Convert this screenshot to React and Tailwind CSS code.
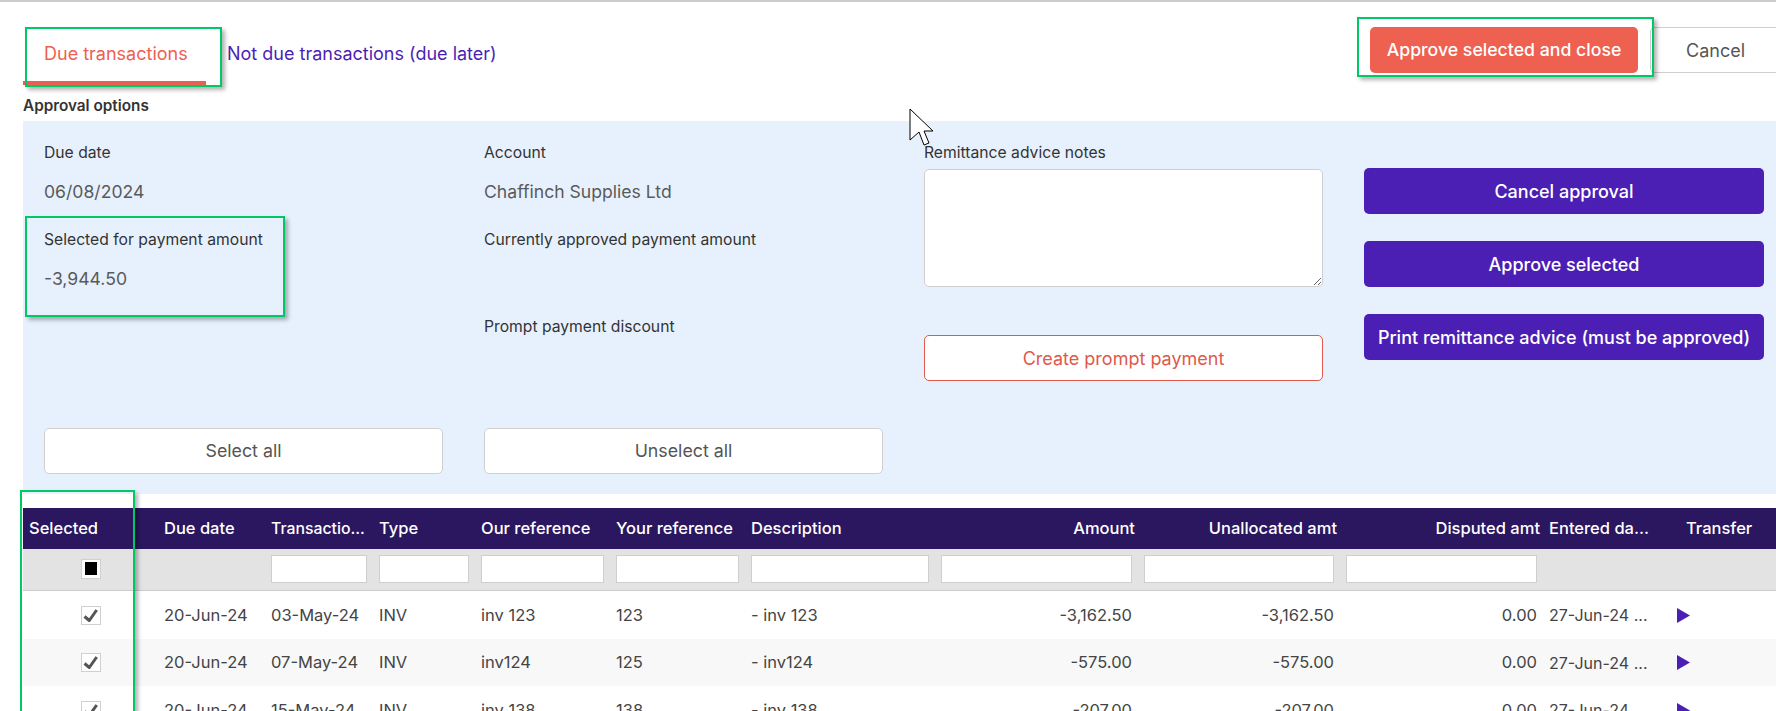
import React from "react";

const rows = [
  { due: "20-Jun-24", trans: "03-May-24", ours: "inv 123", yours: "123", desc: "- inv 123", amt: "-3,162.50", shade: false, h: "h-[48px]" },
  { due: "20-Jun-24", trans: "07-May-24", ours: "inv124", yours: "125", desc: "- inv124", amt: "-575.00", shade: true, h: "h-[47px]" },
  { due: "20-Jun-24", trans: "15-May-24", ours: "inv 138", yours: "138", desc: "- inv 138", amt: "-207.00", shade: false, h: "h-[48px]" },
];

const gridCols =
  "grid grid-cols-[141px_107px_108px_102px_135px_135px_190px_203px_202px_203px_128px_99px] items-center";

const FilterInput = () => (
  <div className="pr-[12px] pb-[2px]">
    <input type="text" className="w-full h-[28px] bg-white border border-[#cfcfcf] block outline-none" />
  </div>
);

const Check = () => (
  <span className="w-[20px] h-[19px] bg-white border border-[#d0d0d0] block">
    <svg width="18" height="17" viewBox="0 0 18 17">
      <path d="M2.5 9.5 L7.3 13.5 L14.7 3" fill="none" stroke="#555" strokeWidth="3" strokeLinejoin="round" />
    </svg>
  </span>
);

const Label = ({ children }) => <div className="text-[15.7px] leading-[18px] text-[#333]">{children}</div>;
const Value = ({ children }) => <div className="text-[17.6px] leading-[22px] text-[#5a5a5a]">{children}</div>;

const OutlineButton = ({ children }) => (
  <button
    type="button"
    className="w-[399px] h-[46px] pt-[1px] bg-white border border-[#cfcfcf] rounded-[5px] text-[17.8px] text-[#555]"
  >
    {children}
  </button>
);

const PurpleButton = ({ children }) => (
  <button
    type="button"
    className="w-[400px] h-[46px] bg-[#4c1fb4] rounded-[5px] text-[18px] font-medium text-white whitespace-nowrap"
  >
    {children}
  </button>
);

const Highlight = ({ className }) => (
  <div
    className={`absolute border-[2px] border-[#00c864] shadow-[3px_3px_4px_rgba(0,0,0,0.3)] pointer-events-none ${className}`}
  />
);

export default function App() {
  return (
    <div className="relative w-[1776px] h-[711px] overflow-hidden bg-white border-t-[2px] border-[#cccccc] font-['Inter',sans-serif]">
      <div className="flex items-start h-[119px] pl-[23px]">
        <div className="flex flex-col pt-[40px]">
          <div className="flex">
            <div className="w-[204px] pl-[21px] text-[18px] leading-[24px] text-[#ee6050]">Due transactions</div>
            <div className="text-[18px] leading-[24px] text-[#4c1fb4]">Not due transactions (due later)</div>
          </div>
          <div className="w-[183px] h-[4px] mt-[15px] bg-[#e8604f]" />
          <div className="mt-[12px] text-[15.3px] leading-[18px] font-semibold text-[#333]">Approval options</div>
        </div>
        <div className="ml-auto flex items-center pt-[25px]">
          <button
            type="button"
            className="w-[268px] h-[46px] bg-[#ee6050] rounded-[5px] text-[17.7px] font-medium text-white whitespace-nowrap"
          >
            Approve selected and close
          </button>
          <button
            type="button"
            className="w-[126px] h-[46px] ml-[12px] pl-[4px] bg-white border border-r-0 border-[#cfcfcf] rounded-l-[5px] text-[18px] text-[#555]"
          >
            Cancel
          </button>
        </div>
      </div>

      <div className="ml-[23px] h-[373px] bg-[#e7f1fe] pl-[21px] pt-[23px] grid grid-cols-[399px_399px_399px_400px] gap-x-[41px]">
        <div className="flex flex-col">
          <Label>Due date</Label>
          <div className="mt-[19px]"><Value>06/08/2024</Value></div>
          <div className="mt-[28px]"><Label>Selected for payment amount</Label></div>
          <div className="mt-[19px]"><Value>-3,944.50</Value></div>
          <div className="mt-[138px]"><OutlineButton>Select all</OutlineButton></div>
        </div>
        <div className="flex flex-col">
          <Label>Account</Label>
          <div className="mt-[19px]"><Value>Chaffinch Supplies Ltd</Value></div>
          <div className="mt-[28px]"><Label>Currently approved payment amount</Label></div>
          <div className="mt-[69px]"><Label>Prompt payment discount</Label></div>
          <div className="mt-[92px]"><OutlineButton>Unselect all</OutlineButton></div>
        </div>
        <div className="flex flex-col">
          <Label>Remittance advice notes</Label>
          <textarea className="block w-[399px] h-[118px] mt-[7px] bg-white border border-[#cfcfcf] rounded-[5px] outline-none" />
          <button
            type="button"
            className="w-[399px] h-[46px] mt-[48px] bg-white border border-[#e0594b] rounded-[5px] text-[18px] text-[#e0594b]"
          >
            Create prompt payment
          </button>
        </div>
        <div className="flex flex-col gap-[27px] pt-[24px]">
          <PurpleButton>Cancel approval</PurpleButton>
          <PurpleButton>Approve selected</PurpleButton>
          <PurpleButton>Print remittance advice (must be approved)</PurpleButton>
        </div>
      </div>

      <div className="ml-[23px] mt-[14px]">
        <div className={`${gridCols} h-[41px] bg-[#2b1660] text-white text-[16.5px] font-medium whitespace-nowrap`}>
          <div className="pl-[6px]">Selected</div>
          <div>Due date</div>
          <div className="text-[15.8px]">Transactio...</div>
          <div>Type</div>
          <div>Our reference</div>
          <div>Your reference</div>
          <div>Description</div>
          <div className="text-right pr-[9px]">Amount</div>
          <div className="text-right pr-[9px]">Unallocated amt</div>
          <div className="text-right pr-[9px]">Disputed amt</div>
          <div>Entered da...</div>
          <div className="pl-[9px]">Transfer</div>
        </div>

        <div className={`${gridCols} h-[42px] bg-[#e3e3e3] border-b border-[#cccccc]`}>
          <div className="pl-[58px] pb-[2px]">
            <span className="w-[20px] h-[20px] bg-white border border-[#d0d0d0] flex items-center justify-center">
              <span className="w-[12px] h-[13px] bg-black" />
            </span>
          </div>
          <div />
          <FilterInput />
          <FilterInput />
          <FilterInput />
          <FilterInput />
          <FilterInput />
          <FilterInput />
          <FilterInput />
          <FilterInput />
        </div>

        {rows.map((row) => (
          <div
            key={row.ours}
            className={`${gridCols} ${row.h} ${row.shade ? "bg-[#f8f8f8]" : "bg-white"} text-[16.5px] text-[#444] whitespace-nowrap`}
          >
            <div className="pl-[58px]"><Check /></div>
            <div>{row.due}</div>
            <div>{row.trans}</div>
            <div>INV</div>
            <div>{row.ours}</div>
            <div>{row.yours}</div>
            <div>{row.desc}</div>
            <div className="text-right pr-[12px]">{row.amt}</div>
            <div className="text-right pr-[12px]">{row.amt}</div>
            <div className="text-right pr-[12px]">0.00</div>
            <div className="text-[16px]">27-Jun-24 ...</div>
            <div>
              <svg className="block" width="13" height="15" viewBox="0 0 13 15">
                <path d="M0 0 L13 7.5 L0 15 Z" fill="#4c1fb4" />
              </svg>
            </div>
          </div>
        ))}
      </div>

      <Highlight className="left-[25px] top-[25px] w-[197px] h-[60px]" />
      <Highlight className="left-[1357px] top-[15px] w-[297px] h-[60px]" />
      <Highlight className="left-[25px] top-[214px] w-[260px] h-[101px]" />
      <Highlight className="left-[20px] top-[488px] w-[115px] h-[240px]" />

      <svg className="absolute left-[909px] top-[106px]" width="25" height="39" viewBox="0 0 25 39">
        <path d="M1 1 L1 32 L10 24 L15 37 L20 35 L15 23 L24 23 Z" fill="#fff" stroke="#000" strokeWidth="1" />
      </svg>
    </div>
  );
}
